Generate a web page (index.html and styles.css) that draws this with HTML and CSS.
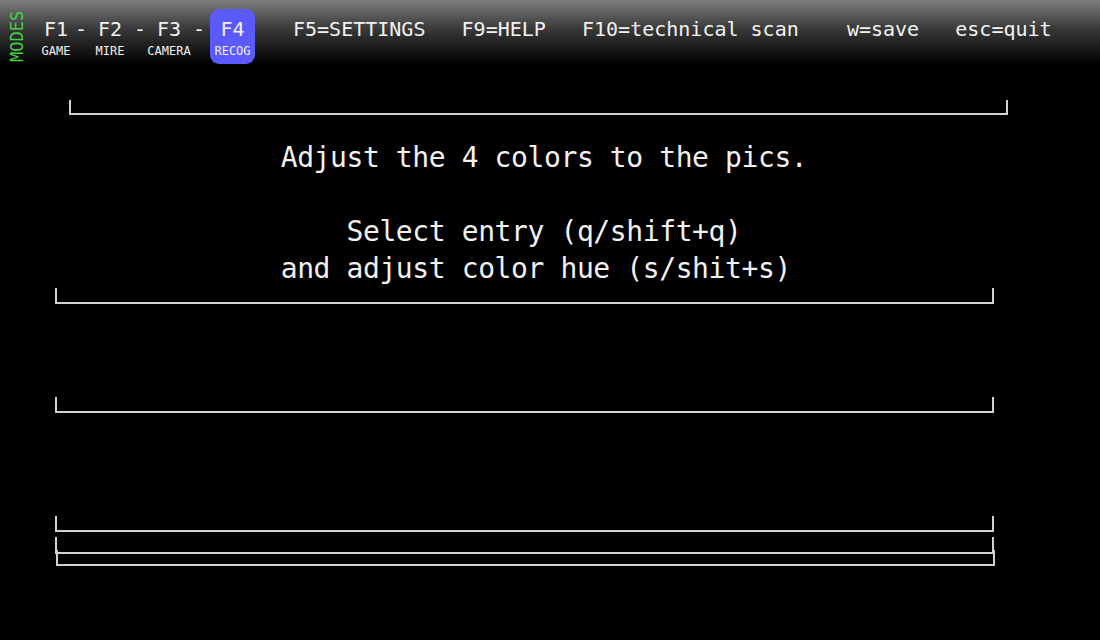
FILE: index.html
```html
<!DOCTYPE html>
<html>
<head>
<meta charset="utf-8">
<link rel="stylesheet" href="styles.css">
</head>
<body>
<header class="topbar">
  <div class="modes-label">MODES</div>
  <div class="modes">
    <div class="mode"><span class="key">F1</span><span class="name">GAME</span></div>
    <div class="dash">-</div>
    <div class="mode"><span class="key">F2</span><span class="name">MIRE</span></div>
    <div class="dash">-</div>
    <div class="mode"><span class="key">F3</span><span class="name">CAMERA</span></div>
    <div class="dash">-</div>
    <div class="mode active"><span class="key">F4</span><span class="name">RECOG</span></div>
  </div>
  <div class="shortcuts">F5=SETTINGS   F9=HELP   F10=technical scan    w=save   esc=quit</div>
</header>
<main class="screen">
  <div class="bracket b1"></div>
  <div class="message">Adjust the 4 colors to the pics.

Select entry (q/shift+q)
and adjust color hue (s/shit+s) </div>
  <div class="bracket b2"></div>
  <div class="bracket b3"></div>
  <div class="bracket b4"></div>
  <div class="bracket b5"></div>
  <div class="bracket b6"></div>
</main>
</body>
</html>
```

FILE: styles.css
```css
html, body {
  margin: 0;
  padding: 0;
  background: #000;
}
body {
  width: 1100px;
  height: 640px;
  overflow: hidden;
  color: #f2f2f2;
  font-family: "DejaVu Sans Mono", "Liberation Mono", monospace;
}

.topbar {
  height: 66px;
  box-sizing: border-box;
  padding: 0 0 0 7px;
  display: flex;
  align-items: flex-start;
  background: linear-gradient(to bottom, #7e7e7e 0px, #3a3a3a 28px, #000 64px);
}

.modes-label {
  writing-mode: vertical-rl;
  transform: rotate(180deg);
  font-size: 17px;
  line-height: 20px;
  color: #45d045;
  margin-top: 10px;
  height: 52px;
  text-align: center;
}

.modes {
  display: grid;
  grid-template-columns: 32px 18px 40px 20px 38px 22px 45px;
  margin-left: 13px;
  margin-top: 9px;
}

.mode {
  display: flex;
  flex-direction: column;
  align-items: center;
  padding: 8px 0 6px;
  white-space: nowrap;
}
.mode.active {
  background: #5a5aff;
  border-radius: 9px;
}
.key {
  font-size: 20px;
  line-height: 24px;
}
.name {
  font-size: 12px;
  line-height: 14px;
  margin-top: 3px;
}

.dash {
  font-size: 20px;
  line-height: 24px;
  padding-top: 8px;
  text-align: center;
}

.shortcuts {
  white-space: pre;
  font-size: 20px;
  line-height: 24px;
  padding-top: 17px;
  margin-left: 38px;
}

.screen {
  display: flex;
  flex-direction: column;
  align-items: flex-start;
}

.bracket {
  box-sizing: border-box;
  border: 2px solid #d2d2d2;
  border-top: none;
  height: 16px;
  width: 939px;
  margin-left: 55px;
}
.b1 {
  margin-top: 34px;
  margin-left: 69px;
  height: 15px;
}
.b2 { margin-top: 0; }
.b3 { margin-top: 93px; }
.b4 { margin-top: 103px; }
.b5 { margin-top: 5px; height: 17px; }
.b6 { margin-top: -4px; margin-left: 56px; }

.message {
  margin-top: 24px;
  width: 1088px;
  white-space: pre;
  text-align: center;
  font-size: 28px;
  letter-spacing: -0.4px;
  line-height: 37px;
  height: 149px;
}
```
